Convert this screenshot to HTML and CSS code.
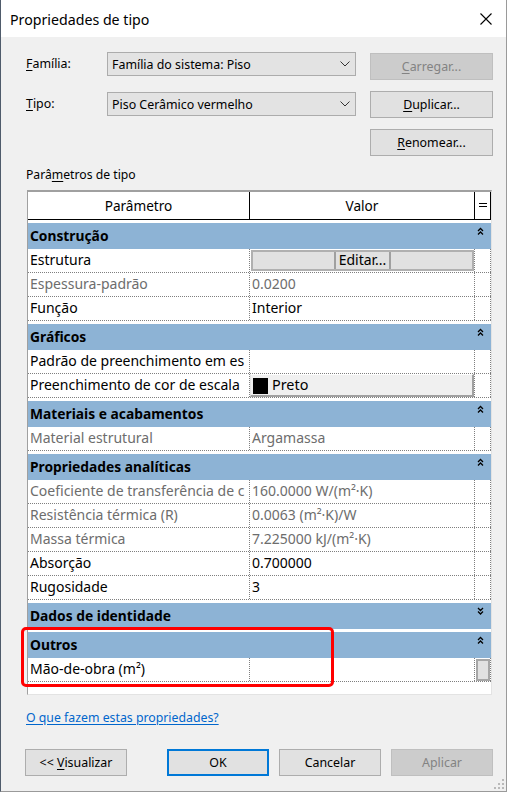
FILE: index.html
```html
<!DOCTYPE html>
<html lang="pt">
<head>
<meta charset="utf-8">
<title>Propriedades de tipo</title>
<link rel="stylesheet" href="styles.css">
</head>
<body>
<div class="win">
  <div class="titlebar">
    <span class="title">Propriedades de tipo</span>
    <svg class="close" width="12" height="12" viewBox="0 0 12 12"><path d="M0.5 0.5 L11.5 11.5 M11.5 0.5 L0.5 11.5" stroke="#000" stroke-width="1.1" fill="none"/></svg>
  </div>

  <div class="top">
    <div class="lbl"><u>F</u>amília:</div>
    <div class="combo"><span>Família do sistema: Piso</span><svg width="10" height="6" viewBox="0 0 10 6"><polyline points="0.5,0.5 5,5 9.5,0.5" stroke="#333" stroke-width="1" fill="none"/></svg></div>
    <div class="btn dis first"><span><u>C</u>arregar...</span></div>

    <div class="lbl second"><u>T</u>ipo:</div>
    <div class="combo second"><span>Piso Cerâmico vermelho</span><svg width="10" height="6" viewBox="0 0 10 6"><polyline points="0.5,0.5 5,5 9.5,0.5" stroke="#333" stroke-width="1" fill="none"/></svg></div>
    <div class="btn"><span><u>D</u>uplicar...</span></div>

    <div class="btn third"><span><u>R</u>enomear...</span></div>
  </div>

  <div class="plabel">Parâ<u>m</u>etros de tipo</div>

  <div class="table">
    <div class="thead">
      <div class="hc c1">Parâmetro</div>
      <div class="hc c2">Valor</div>
      <div class="hc c3"><svg width="8" height="5" viewBox="0 0 8 5"><path d="M0 0.5 H8 M0 3.5 H8" stroke="#000" stroke-width="1" fill="none"/></svg></div>
    </div>

    <div class="section">
      <div class="sh"><span>Construção</span><svg class="chev" width="7" height="8" viewBox="0 0 7 8"><path d="M1 4 L3.5 1.5 L6 4 M1 7.5 L3.5 5 L6 7.5" stroke="#000" stroke-width="1.3" fill="none"/></svg></div>
      <div class="row"><div class="cell c1">Estrutura</div><div class="cell c2 nopad"><div class="editbtn"><span>Editar...</span></div></div><div class="cell c3"></div></div>
      <div class="row dim"><div class="cell c1">Espessura-padrão</div><div class="cell c2">0.0200</div><div class="cell c3"></div></div>
      <div class="row"><div class="cell c1">Função</div><div class="cell c2">Interior</div><div class="cell c3"></div></div>
    </div>

    <div class="section">
      <div class="sh"><span>Gráficos</span><svg class="chev" width="7" height="8" viewBox="0 0 7 8"><path d="M1 4 L3.5 1.5 L6 4 M1 7.5 L3.5 5 L6 7.5" stroke="#000" stroke-width="1.3" fill="none"/></svg></div>
      <div class="row"><div class="cell c1">Padrão de preenchimento em es</div><div class="cell c2"></div><div class="cell c3"></div></div>
      <div class="row"><div class="cell c1">Preenchimento de cor de escala</div><div class="cell c2 nopad"><div class="colorbtn"><span class="swatch"></span><span>Preto</span></div></div><div class="cell c3"></div></div>
    </div>

    <div class="section">
      <div class="sh"><span>Materiais e acabamentos</span><svg class="chev" width="7" height="8" viewBox="0 0 7 8"><path d="M1 4 L3.5 1.5 L6 4 M1 7.5 L3.5 5 L6 7.5" stroke="#000" stroke-width="1.3" fill="none"/></svg></div>
      <div class="row dim"><div class="cell c1">Material estrutural</div><div class="cell c2">Argamassa</div><div class="cell c3"></div></div>
    </div>

    <div class="section">
      <div class="sh"><span>Propriedades analíticas</span><svg class="chev" width="7" height="8" viewBox="0 0 7 8"><path d="M1 4 L3.5 1.5 L6 4 M1 7.5 L3.5 5 L6 7.5" stroke="#000" stroke-width="1.3" fill="none"/></svg></div>
      <div class="row dim"><div class="cell c1">Coeficiente de transferência de c</div><div class="cell c2">160.0000 W/(m²·K)</div><div class="cell c3"></div></div>
      <div class="row dim"><div class="cell c1">Resistência térmica (R)</div><div class="cell c2">0.0063 (m²·K)/W</div><div class="cell c3"></div></div>
      <div class="row dim"><div class="cell c1">Massa térmica</div><div class="cell c2">7.225000 kJ/(m²·K)</div><div class="cell c3"></div></div>
      <div class="row"><div class="cell c1">Absorção</div><div class="cell c2">0.700000</div><div class="cell c3"></div></div>
      <div class="row"><div class="cell c1">Rugosidade</div><div class="cell c2">3</div><div class="cell c3"></div></div>
    </div>

    <div class="section">
      <div class="sh"><span>Dados de identidade</span><svg class="chev" width="7" height="8" viewBox="0 0 7 8"><path d="M1 1 L3.5 3.5 L6 1 M1 4.5 L3.5 7 L6 4.5" stroke="#000" stroke-width="1.3" fill="none"/></svg></div>
    </div>

    <div class="section">
      <div class="sh"><span>Outros</span><svg class="chev" width="7" height="8" viewBox="0 0 7 8"><path d="M1 4 L3.5 1.5 L6 4 M1 7.5 L3.5 5 L6 7.5" stroke="#000" stroke-width="1.3" fill="none"/></svg></div>
      <div class="row"><div class="cell c1">Mão-de-obra (m²)</div><div class="cell c2"></div><div class="cell c3 nopad"><div class="thumb"></div></div></div>
    </div>
  </div>

  <div class="link">O que fazem estas propriedades?</div>

  <div class="buttons">
    <div class="bbtn preview"><span>&lt;&lt; <u>V</u>isualizar</span></div>
    <div class="bbtn ok"><span>OK</span></div>
    <div class="bbtn"><span>Cancelar</span></div>
    <div class="bbtn dis"><span>Aplicar</span></div>
  </div>

  <div class="highlight"></div>

  <svg class="grip" width="11" height="11" viewBox="0 0 11 11">
    <rect x="8" y="0" width="2" height="2" fill="#b9b9b9"/>
    <rect x="4" y="4" width="2" height="2" fill="#b9b9b9"/>
    <rect x="8" y="4" width="2" height="2" fill="#b9b9b9"/>
    <rect x="0" y="8" width="2" height="2" fill="#b9b9b9"/>
    <rect x="4" y="8" width="2" height="2" fill="#b9b9b9"/>
    <rect x="8" y="8" width="2" height="2" fill="#b9b9b9"/>
  </svg>
</div>
</body>
</html>
```

FILE: styles.css
```css
* { box-sizing: border-box; }

html, body {
  margin: 0;
  padding: 0;
}

body {
  width: 508px;
  height: 793px;
  overflow: hidden;
  background: #ffffff;
  font-family: "Noto Sans", "Open Sans", "DejaVu Sans", sans-serif;
  font-size: 12.4px;
  color: #000;
}

u { text-decoration: underline; text-underline-offset: 2px; }

.win {
  position: relative;
  width: 507px;
  height: 792px;
  background: #f0f0f0;
  border-left: 1px solid #4f5b6b;
  border-right: 1px solid #9a9a9a;
  border-bottom: 1px solid #9a9a9a;
}

.titlebar {
  height: 37px;
  background: #ffffff;
  display: flex;
  align-items: center;
  justify-content: space-between;
  padding: 1px 14px 0 9px;
}

.title { font-size: 14.2px; }

/* top controls */
.top {
  display: grid;
  grid-template-columns: 67px 249px 123px;
  grid-template-rows: 39px 38px 27px;
  column-gap: 14px;
  margin: 15px 0 0 25px;
  align-items: start;
}

.lbl { line-height: 24px; }
.lbl.second { margin-top: 1px; }

.combo {
  height: 24px;
  border: 1px solid #acacac;
  background: #e3e3e3;
  display: flex;
  align-items: center;
  justify-content: space-between;
  padding: 0 5px 0 4px;
}
.combo.second { margin-top: 1px; }

.btn {
  height: 27px;
  border: 1px solid #adadad;
  background: #e1e1e1;
  display: flex;
  align-items: center;
  justify-content: center;
}
.btn.first { margin-top: 1px; }
.btn.third { grid-column: 3; }
.btn.dis { background: #cccccc; border-color: #bfbfbf; color: #838383; }

.plabel {
  margin: 10px 0 0 25px;
  line-height: 18px;
  font-size: 12.2px;
}

/* property grid */
.table {
  margin: 6px 0 0 26px;
  width: 465px;
  height: 505px;
  background: #ffffff;
  border-top: 2px solid #a0a0a0;
  border-left: 1px solid #a0a0a0;
  border-right: 1px solid #e3e3e3;
  border-bottom: 1px solid #e3e3e3;
}

.thead {
  display: flex;
  height: 28px;
  border-bottom: 1px solid #000;
}

.hc {
  border-right: 1px solid #000;
  display: flex;
  align-items: center;
  justify-content: center;
  font-size: 13.6px;
}

.c1 { width: 222px; flex: none; }
.c2 { width: 225px; flex: none; }
.c3 { width: 16px; flex: none; }

.section { margin-top: 3px; }

.sh {
  height: 26px;
  background: #8db3d5;
  display: flex;
  justify-content: space-between;
  align-items: flex-start;
  padding: 0 7px 0 2px;
  font-weight: bold;
  font-size: 13.8px;
  line-height: 26px;
}
.chev { margin-top: 4px; }

.row {
  display: flex;
  height: 24px;
  border-bottom: 1px dotted #7f7f7f;
}

.cell {
  border-right: 1px dotted #7f7f7f;
  padding-left: 2px;
  line-height: 21px;
  overflow: hidden;
  white-space: nowrap;
  font-size: 14px;
}
.cell.nopad { padding-left: 0; }

.dim { color: #6d6d6d; }

.editbtn {
  margin: 1px 0 0 1px;
  width: 223px;
  height: 21px;
  background: #e1e1e1;
  border: 2px solid #b0b0b0;
  display: flex;
  justify-content: center;
}
.editbtn span {
  border-left: 2px solid #a0a0a0;
  border-right: 2px solid #a0a0a0;
  padding: 0 3px;
  line-height: 16px;
}

.colorbtn {
  width: 224px;
  height: 23px;
  background: #f0f0f0;
  border-top: 1px solid #ffffff;
  border-left: 1px solid #e3e3e3;
  border-right: 2px solid #a0a0a0;
  border-bottom: 2px solid #a0a0a0;
  display: flex;
  align-items: center;
  padding-left: 1px;
  line-height: 20px;
  font-size: 14.4px;
}
.swatch {
  width: 15px;
  height: 16px;
  background: #000;
  margin: 1px 4px 0 1px;
}

.thumb {
  margin: 1px 0 0 1px;
  width: 14px;
  height: 22px;
  background: #e1e1e1;
  border: 2px solid #a6a6a6;
}

/* bottom */
.link {
  margin: 14px 0 0 25px;
  line-height: 18px;
  color: #0066cc;
  text-decoration: underline;
  text-underline-offset: 2px;
  font-size: 12.3px;
}

.buttons {
  display: flex;
  gap: 10px;
  margin: 22px 0 0 24px;
}

.bbtn {
  width: 102px;
  height: 27px;
  border: 1px solid #adadad;
  background: #e1e1e1;
  display: flex;
  align-items: center;
  justify-content: center;
}
.bbtn.preview { margin-right: 30px; }
.bbtn.ok { border: 2px solid #0078d7; }
.bbtn.dis { background: #cccccc; border-color: #bfbfbf; color: #838383; }

.highlight {
  position: absolute;
  left: 20px;
  top: 627px;
  width: 313px;
  height: 60px;
  border: 3px solid #ff0000;
  border-radius: 5px;
  pointer-events: none;
}

.grip {
  position: absolute;
  right: 1px;
  bottom: 1px;
}
```
